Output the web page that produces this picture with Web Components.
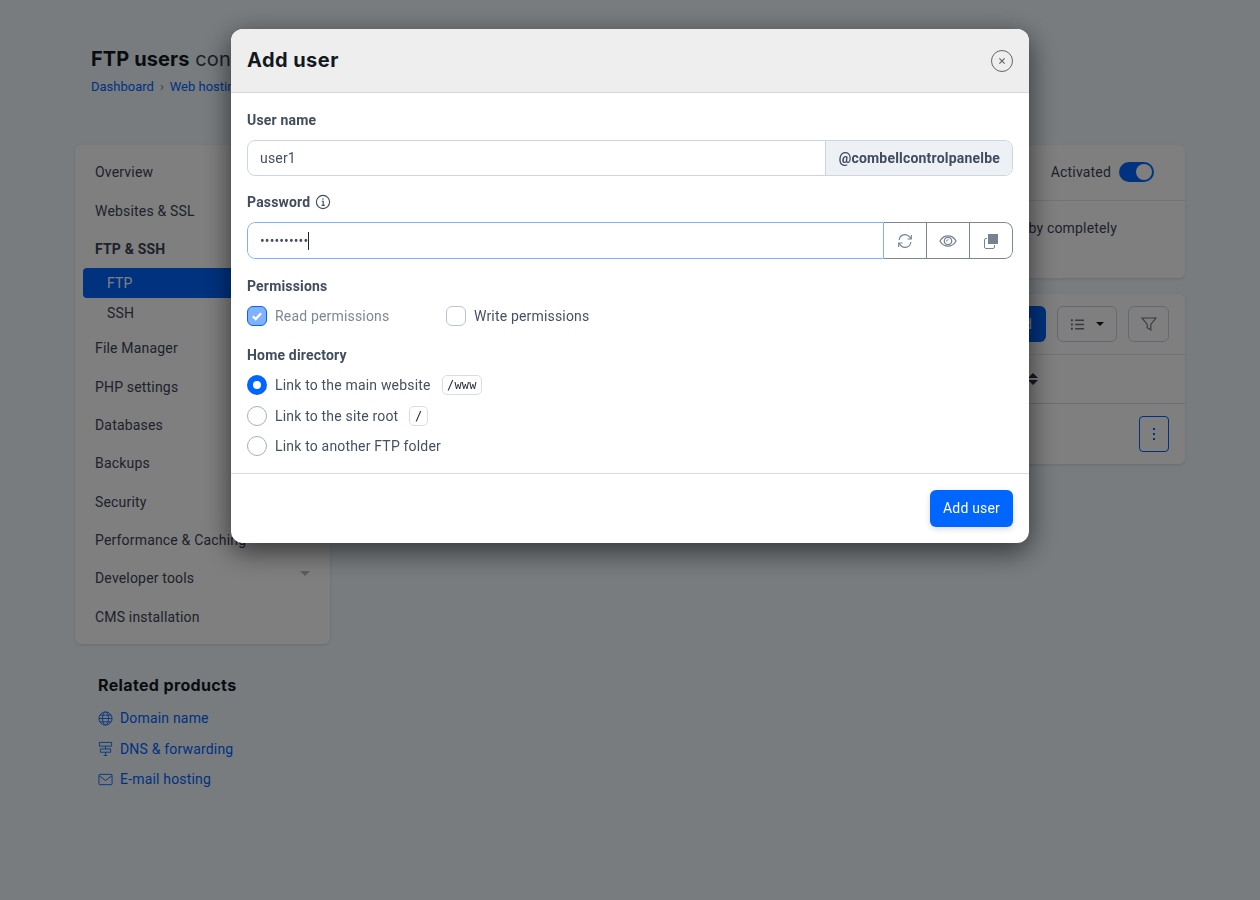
<!DOCTYPE html>
<html lang="en">
<head>
<meta charset="utf-8">
<title>FTP users</title>
<style>
    html, body { margin: 0; height: 100%; }
    body {
        background: #f0f8fe;
        font: 14px/20px Roboto, "Liberation Sans", sans-serif;
        letter-spacing: .18px;
        color: #3b4557;
        overflow: hidden;
    }
</style>
</head>
<body>

<page-head></page-head>

<page-columns>
    <div slot="side">
        <side-nav></side-nav>
        <related-products></related-products>
    </div>
    <activation-card></activation-card>
    <users-card></users-card>
</page-columns>

<modal-dialog heading="Add user">
    <add-user-form></add-user-form>
    <action-button slot="footer">Add user</action-button>
</modal-dialog>

<script>
const ICONS = {
    info: '<circle cx="8" cy="8" r="6.6"/><path d="M6.8 7.2H8.2V11.4M6.6 11.4H9.8"/><path d="M8 4.4v1.2" stroke-width="1.6"/>',
    close: '<path d="M5 5l6 6M11 5l-6 6" stroke-width="1.4"/>',
    refresh: '<path d="M2.2 7A5.8 5.8 0 0 1 12.6 3.9L14 5.6"/><path d="M14.3 2V6H10.5"/><path d="M13.8 9A5.8 5.8 0 0 1 3.4 12.1L2 10.4"/><path d="M1.7 14V10H5.5"/>',
    eye: '<path d="M.8 8C2.6 5 5 3.4 8 3.4S13.4 5 15.2 8C13.4 11 11 12.6 8 12.6S2.6 11 .8 8Z"/><circle cx="8" cy="8" r="3.3"/><path d="M6.4 8.8A2 2 0 0 1 8.8 6.4Z" fill="currentColor" stroke="none"/>',
    globe: '<circle cx="8" cy="8" r="7"/><ellipse cx="8" cy="8" rx="3.2" ry="7"/><path d="M1 8h14M2 4.4h12M2 11.6h12"/>',
    sign: '<path d="M1.5 1.5h13v4h-13zM2.5 8.5h11v3.5h-11zM8 5.5v3M8 12v3.5M6 15.5h4"/>',
    mail: '<rect x="1" y="2.5" width="14" height="11" rx="1.2"/><path d="M1.2 4L8 9l6.8-5"/>',
    list: '<path d="M5.5 3.5H15M5.5 8H15M5.5 12.5H15" stroke-width="1.5"/><path d="M1 2.5h2v2H1zM1 7h2v2H1zM1 11.5h2v2H1z" fill="currentColor" stroke="none"/>',
    filter: '<path d="M1 2h14L9.8 8.4V14L6.2 11.8V8.4Z"/>'
};

function icon(name, size, stroke = 1.15) {
    return `<svg width="${size}" height="${size}" viewBox="0 0 16 16" fill="none" stroke="currentColor" stroke-width="${stroke}" aria-hidden="true" style="display:block">${ICONS[name]}</svg>`;
}

class PageHead extends HTMLElement {
    constructor() {
        super();
        this.attachShadow({ mode: 'open' });
    }

    connectedCallback() {
        this.shadowRoot.innerHTML = `
            <style>
                :host { display: block; padding: 44px 91px 0; height: 145px; box-sizing: border-box; }
                h1 { margin: 0; font: 400 20px/30px Inter, sans-serif; color: #3a3f46; letter-spacing: .1px; }
                b { font-weight: 700; color: #14181f; }
                nav { display: flex; gap: 6px; margin-top: 3px; font-size: 13px; line-height: 20px; letter-spacing: 0; }
                a { color: #0064ff; text-decoration: none; }
                span { color: #6f7a88; }
            </style>
            <h1><b>FTP users</b> configuration</h1>
            <nav><a>Dashboard</a><span>›</span><a>Web hosting</a></nav>
        `;
    }
}

class PageColumns extends HTMLElement {
    constructor() {
        super();
        this.attachShadow({ mode: 'open' });
    }

    connectedCallback() {
        this.shadowRoot.innerHTML = `
            <style>
                :host { display: grid; grid-template-columns: 255px 1fr; gap: 16px; padding: 0 75px; align-items: start; }
                main { display: flex; flex-direction: column; gap: 16px; }
            </style>
            <slot name="side"></slot>
            <main><slot></slot></main>
        `;
    }
}

class SideNav extends HTMLElement {
    constructor() {
        super();
        this.attachShadow({ mode: 'open' });
    }

    connectedCallback() {
        const rows = [
            ['Overview'], ['Websites & SSL'], ['FTP & SSH', 'group'],
            ['FTP', 'sub on'], ['SSH', 'sub'],
            ['File Manager'], ['PHP settings'], ['Databases'], ['Backups'], ['Security'],
            ['Performance & Caching'], ['Developer tools', 'more'], ['CMS installation']
        ];
        const items = rows.map(([label, cls = '']) => `<a class="${cls}">${label.replace('&', '&amp;')}</a>`).join('');
        this.shadowRoot.innerHTML = `
            <style>
                :host { display: block; background: #fff; border-radius: 6px; box-shadow: 0 1px 3px rgba(0,0,0,.12); padding: 8px; }
                nav { display: flex; flex-direction: column; }
                a { display: flex; align-items: center; justify-content: space-between; height: 38.35px; padding: 0 12px; color: #3b4557; }
                .group { font-weight: 700; }
                .sub { height: 30px; padding-left: 24px; }
                .sub.on { background: #0064ff; color: #fff; border-radius: 4px; }
                .sub:not(.on) { margin-bottom: 1px; }
                .more::after { content: ""; border: 5px solid transparent; border-top: 5px solid #b3bac3; border-bottom: 0; margin: 0 0 9px 0; }
            </style>
            <nav>${items}</nav>
        `;
    }
}

class RelatedProducts extends HTMLElement {
    constructor() {
        super();
        this.attachShadow({ mode: 'open' });
    }

    connectedCallback() {
        this.shadowRoot.innerHTML = `
            <style>
                :host { display: block; padding: 30px 23px 0; }
                h3 { margin: 0 0 7px; font: 700 16px/22px Inter, sans-serif; color: #14181f; letter-spacing: .36px; }
                a { display: flex; align-items: center; gap: 7px; height: 30.5px; color: #0064ff; }
            </style>
            <h3>Related products</h3>
            <a>${icon('globe', 15, .9)}Domain name</a>
            <a>${icon('sign', 15, .9)}DNS &amp; forwarding</a>
            <a>${icon('mail', 15, .95)}E-mail hosting</a>
        `;
    }
}

class ActivationCard extends HTMLElement {
    constructor() {
        super();
        this.attachShadow({ mode: 'open' });
    }

    connectedCallback() {
        this.shadowRoot.innerHTML = `
            <style>
                :host { display: block; height: 133px; background: #fff; border-radius: 6px; box-shadow: 0 1px 3px rgba(0,0,0,.12); }
                header { display: flex; justify-content: flex-end; align-items: center; gap: 8px; box-sizing: border-box; height: 56px; padding: 0 31px 2px 0; border-bottom: 1px solid #e3e8ee; }
                i { display: block; width: 35px; height: 20px; border-radius: 10px; background: #0064ff; position: relative; }
                i::after { content: ""; position: absolute; right: 2px; top: 2px; width: 16px; height: 16px; border-radius: 50%; background: #fff; }
                p { margin: 0; padding: 17px 68px 0 0; text-align: right; }
            </style>
            <header>Activated<i></i></header>
            <p>by completely</p>
        `;
    }
}

class UsersCard extends HTMLElement {
    constructor() {
        super();
        this.attachShadow({ mode: 'open' });
    }

    connectedCallback() {
        this.shadowRoot.innerHTML = `
            <style>
                :host { display: block; height: 170px; background: #fff; border-radius: 6px; box-shadow: 0 1px 3px rgba(0,0,0,.12); }
                .tools { display: flex; justify-content: flex-end; align-items: flex-start; gap: 11px; height: 61px; padding: 12px 16px 0 0; border-bottom: 1px solid #e3e8ee; box-sizing: border-box; }
                .add { display: flex; align-items: center; height: 36px; padding: 0 14px; border-radius: 6px; background: #0064ff; color: #fff; }
                .tool { display: flex; align-items: center; justify-content: center; gap: 11px; height: 36px; box-sizing: border-box; border: 1px solid #c8d2de; border-radius: 6px; color: #6a7482; }
                .list { width: 60px; }
                .filter { width: 41px; }
                .caret { border: 4px solid transparent; border-top: 4px solid #14181f; border-bottom: 0; }
                .head { display: flex; align-items: center; justify-content: flex-end; height: 49px; padding-right: 147px; border-bottom: 1px solid #d5dbe2; box-sizing: border-box; }
                .sort { display: flex; flex-direction: column; gap: 2px; }
                .sort b { display: block; border: 5px solid transparent; border-top: 0; border-bottom: 5px solid #2b3342; }
                .sort b + b { border-bottom: 0; border-top: 5px solid #2b3342; }
                .row { display: flex; justify-content: flex-end; padding: 12px 16px 0; }
                .kebab { display: flex; flex-direction: column; align-items: center; justify-content: center; gap: 2.5px; width: 30px; height: 36px; box-sizing: border-box; border: 1px solid #0064ff; border-radius: 4px; }
                .kebab b { width: 2.5px; height: 2.5px; background: #0064ff; }
            </style>
            <div class="tools">
                <div class="add">Add</div>
                <div class="tool list">${icon('list', 15)}<span class="caret"></span></div>
                <div class="tool filter">${icon('filter', 16)}</div>
            </div>
            <div class="head"><div class="sort"><b></b><b></b></div></div>
            <div class="row"><div class="kebab"><b></b><b></b><b></b></div></div>
        `;
    }
}

class ModalDialog extends HTMLElement {
    constructor() {
        super();
        this.attachShadow({ mode: 'open' });
    }

    connectedCallback() {
        this.shadowRoot.innerHTML = `
            <style>
                :host { position: fixed; inset: 0; display: flex; justify-content: center; align-items: flex-start; padding-top: 29px; background: rgba(0,0,0,.5); }
                section { width: 798px; background: #fff; border-radius: 12px; overflow: hidden; box-shadow: 0 8px 28px rgba(0,0,0,.6); }
                header { display: flex; align-items: center; justify-content: space-between; height: 64px; box-sizing: border-box; padding: 0 16px; background: #eeeeee; border-bottom: 1px solid #ced9e6; }
                h2 { margin: -2px 0 0; font: 700 20px/30px Inter, sans-serif; color: #14181f; letter-spacing: .45px; }
                .close { width: 22px; height: 22px; box-sizing: border-box; border: 1px solid #666; border-radius: 50%; color: #666; display: flex; align-items: center; justify-content: center; }
                footer { display: flex; justify-content: flex-end; padding: 16px; border-top: 1px solid #d5dde6; }
            </style>
            <section>
                <header>
                    <h2>${this.getAttribute('heading')}</h2>
                    <div class="close">${icon('close', 14)}</div>
                </header>
                <slot></slot>
                <footer><slot name="footer"></slot></footer>
            </section>
        `;
    }
}

class ActionButton extends HTMLElement {
    constructor() {
        super();
        this.attachShadow({ mode: 'open' });
    }

    connectedCallback() {
        this.shadowRoot.innerHTML = `
            <style>
                :host { display: flex; align-items: center; box-sizing: border-box; height: 37px; padding: 0 13px 1px; border-radius: 6px; background: #0066ff; color: #fff; box-shadow: 0 2px 6px rgba(0,0,0,.15); }
            </style>
            <slot></slot>
        `;
    }
}

class AddUserForm extends HTMLElement {
    constructor() {
        super();
        this.attachShadow({ mode: 'open' });
    }

    connectedCallback() {
        this.shadowRoot.innerHTML = `
            <style>
                :host { display: block; padding: 17px 16px 17px; color: #465063; }
                label { display: flex; align-items: center; gap: 5px; font-weight: 700; height: 20px; color: #414c5e; }
                .field { display: flex; box-sizing: border-box; border: 1px solid #cbd6e3; border-radius: 8px; height: 36px; margin: 10px 0 16px; overflow: hidden; }
                .value { flex: 1; display: flex; align-items: center; padding: 0 12px; }
                .addon { display: flex; align-items: center; padding: 0 12px 0 12.5px; background: #edf1f6; border-left: 1px solid #cbd6e3; font-weight: 700; letter-spacing: .2px; color: #414c5e; }
                .pass { height: 37px; margin: 10px 0 17px; border: 0; }
                .pass .value { border: 1px solid #79b1ff; border-radius: 8px 0 0 8px; letter-spacing: .1px; }
                .caret { width: 1px; height: 18px; background: #1f2633; }
                .btn { box-sizing: border-box; width: 43px; display: flex; align-items: center; justify-content: center; border: 1px solid #7c8794; border-left: 0; color: #768292; }
                .btn:last-child { border-radius: 0 8px 8px 0; }
                .copy { position: relative; width: 16px; height: 16px; }
                .copy i { position: absolute; display: block; box-sizing: border-box; }
                .copy .back { left: 1px; top: 5px; width: 11px; height: 11px; border: 1.2px solid #768292; border-radius: 2px; }
                .copy .front { left: 5px; top: 1px; width: 10px; height: 10px; background: #768292; outline: 1px solid #fff; }
                .checks { display: flex; gap: 56.5px; margin: 10px 0 19px; }
                .check, .radio { display: flex; align-items: center; gap: 8px; height: 20px; }
                .box { width: 20px; height: 20px; box-sizing: border-box; border: 1px solid #b8c4d2; border-radius: 6px; display: flex; align-items: center; justify-content: center; color: #fff; }
                .box.on { background: #80b2ff; border-color: #0064ff; }
                .dis { color: #7c8797; }
                .radios { display: flex; flex-direction: column; gap: 10.5px; margin-top: 10px; }
                .dot { width: 20px; height: 20px; box-sizing: border-box; border: 1px solid #a3afbd; border-radius: 50%; }
                .dot.on { border: 6px solid #0066ff; }
                code { font: 12px/16px "DejaVu Sans Mono", monospace; letter-spacing: .15px; border: 1px solid #d5dde6; border-radius: 5px; padding: 1px 4.5px; margin-left: 3px; color: #222a36; }
            </style>
            <label>User name</label>
            <div class="field"><div class="value">user1</div><div class="addon">@combellcontrolpanelbe</div></div>

            <label>Password ${icon('info', 16)}</label>
            <div class="field pass">
                <div class="value">••••••••••<span class="caret"></span></div>
                <div class="btn">${icon('refresh', 16)}</div>
                <div class="btn">${icon('eye', 18)}</div>
                <div class="btn"><div class="copy"><i class="back"></i><i class="front"></i></div></div>
            </div>

            <label>Permissions</label>
            <div class="checks">
                <div class="check dis"><span class="box on"><svg width="14" height="14" viewBox="0 0 12 12" fill="none" stroke="currentColor" stroke-width="2"><path d="M2.5 6.2l2.4 2.4 4.6-5"/></svg></span>Read permissions</div>
                <div class="check"><span class="box"></span>Write permissions</div>
            </div>

            <label>Home directory</label>
            <div class="radios">
                <div class="radio"><span class="dot on"></span>Link to the main website <code>/www</code></div>
                <div class="radio"><span class="dot"></span>Link to the site root <code>/</code></div>
                <div class="radio"><span class="dot"></span>Link to another FTP folder</div>
            </div>
        `;
    }
}

customElements.define('page-head', PageHead);
customElements.define('page-columns', PageColumns);
customElements.define('side-nav', SideNav);
customElements.define('related-products', RelatedProducts);
customElements.define('activation-card', ActivationCard);
customElements.define('users-card', UsersCard);
customElements.define('modal-dialog', ModalDialog);
customElements.define('action-button', ActionButton);
customElements.define('add-user-form', AddUserForm);
</script>
</body>
</html>
